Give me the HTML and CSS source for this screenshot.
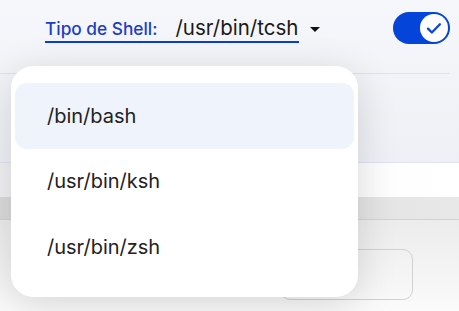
FILE: index.html
```html
<!DOCTYPE html>
<html>
<head>
<meta charset="utf-8">
<link rel="stylesheet" href="styles.css">
</head>
<body>
<div class="page">
  <section class="top">
    <div class="header">
      <div class="field">
        <span class="label">Tipo de Shell:</span>
        <span class="value">/usr/bin/tcsh</span>
      </div>
      <span class="caret"></span>
      <div class="toggle">
        <span class="knob">
          <svg viewBox="0 0 24 24" width="24" height="24"><path d="M6 12.6l3.9 3.9 8-8.2" fill="none" stroke="#0a44d6" stroke-width="2.3" stroke-linecap="round" stroke-linejoin="round"/></svg>
        </span>
      </div>
    </div>
  </section>
  <section class="plain"></section>
  <section class="band"></section>
  <section class="lower">
    <div class="input"></div>
  </section>

  <ul class="menu">
    <li class="item active">/bin/bash</li>
    <li class="item">/usr/bin/ksh</li>
    <li class="item">/usr/bin/zsh</li>
  </ul>
</div>
</body>
</html>
```

FILE: styles.css
```css
html, body {
  margin: 0;
  padding: 0;
}
body {
  width: 459px;
  height: 311px;
  overflow: hidden;
  background: #ffffff;
  font-family: "Inter", "Lato", "Liberation Sans", sans-serif;
}
.page {
  position: relative;
  width: 459px;
  height: 311px;
  overflow: hidden;
}
.top {
  height: 163px;
  background: linear-gradient(180deg, #f6f7fb 0%, #eff0f5 100%);
  border-bottom: 1px solid #dfe2f0;
  box-sizing: border-box;
}
.header {
  height: 74px;
  margin-right: 9px;
  border-bottom: 1px solid #dfe2ee;
  box-sizing: border-box;
  display: flex;
  align-items: flex-start;
  padding-left: 45px;
  padding-top: 14px;
}
.field {
  display: flex;
  align-items: baseline;
  border-bottom: 2px solid #0a3fd0;
  height: 27px;
  padding-right: 1px;
}
.label {
  color: #1b3ec6;
  font-size: 17.3px;
  font-weight: 500;
  margin-right: 18px;
  line-height: 27px;
}
.value {
  color: #1a1a1a;
  font-size: 20.5px;
  line-height: 27px;
}
.caret {
  width: 0;
  height: 0;
  border-left: 5px solid transparent;
  border-right: 5px solid transparent;
  border-top: 5px solid #111;
  margin-left: 11px;
  margin-top: 13px;
}
.toggle {
  margin-left: auto;
  margin-top: -2px;
  width: 57px;
  height: 32px;
  border-radius: 16px;
  background: #0544d8;
  display: flex;
  align-items: center;
  justify-content: flex-end;
  padding-right: 2px;
  box-sizing: border-box;
}
.knob {
  width: 28px;
  height: 28px;
  border-radius: 50%;
  background: #fff;
  display: flex;
  align-items: center;
  justify-content: center;
}
.plain {
  height: 34px;
  background: linear-gradient(90deg, #f1f1f3 0%, #fafafa 60%, #ffffff 100%);
}
.band {
  height: 23px;
  background: linear-gradient(90deg, #dadada 0%, #e0e0e0 60%, #e8e8e8 100%);
  border-bottom: 1px solid #d3d3d3;
  box-sizing: border-box;
}
.lower {
  height: 91px;
  background: linear-gradient(180deg, #ececec 0%, #f6f6f6 70%, #fbfbfb 100%);
  padding-top: 29px;
  padding-left: 280px;
  box-sizing: border-box;
}
.input {
  width: 133px;
  height: 51px;
  border: 1px solid #d2d2d2;
  border-radius: 10px;
  box-sizing: border-box;
}
.menu {
  position: absolute;
  left: 11px;
  top: 66px;
  width: 347px;
  height: 231px;
  margin: 0;
  padding: 17px 4px 0;
  box-sizing: border-box;
  list-style: none;
  background: #ffffff;
  border-radius: 22px;
  box-shadow: 0 8px 40px rgba(0, 0, 0, 0.14);
}
.item {
  height: 65.5px;
  display: flex;
  align-items: center;
  padding-left: 32px;
  font-size: 20px;
  color: #222222;
  border-radius: 12px;
}
.item.active {
  background: #eff3fc;
}
```
